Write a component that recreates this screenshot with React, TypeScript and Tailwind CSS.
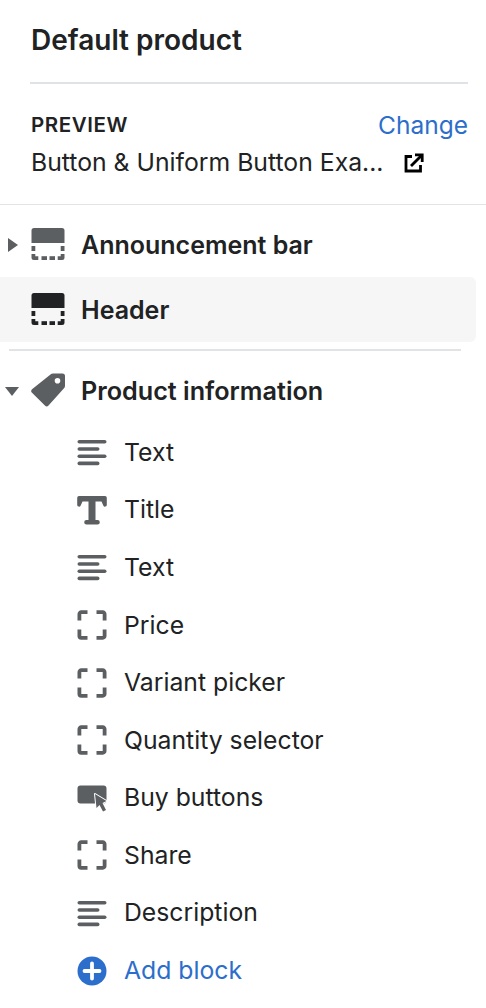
import React from 'react';

const ICON = '#5c5f62';

function LinesIcon() {
  return (
    <svg width="32" height="32" viewBox="0 0 32 32" fill={ICON}>
      <rect x="1.500" y="4" width="29" height="3.600" rx="1.800" />
      <rect x="1.500" y="11.200" width="22" height="3.600" rx="1.800" />
      <rect x="1.500" y="18.400" width="29" height="3.600" rx="1.800" />
      <rect x="1.500" y="25.600" width="22" height="3.600" rx="1.800" />
    </svg>
  );
}

function TitleIcon() {
  return (
    <svg width="32" height="32" viewBox="0 0 32 32" fill={ICON}>
      <path d="M3 2h26a1.800 1.800 0 0 1 1.800 1.800V11a1.800 1.800 0 0 1-3.500.4L25.500 7.500H19.500V26h2a2.300 2.300 0 0 1 0 4.600H10.500a2.300 2.300 0 0 1 0-4.600h2V7.500H6.500L4.700 11.400A1.800 1.800 0 0 1 1.200 11V3.800A1.800 1.800 0 0 1 3 2z" />
    </svg>
  );
}

function FrameIcon() {
  return (
    <svg width="32" height="32" viewBox="0 0 32 32" fill="none" stroke={ICON} strokeWidth="3.800">
      <path d="M3.400 11.500V5a1.800 1.800 0 0 1 1.800-1.800H11.500" />
      <path d="M20.500 3.200h6.300a1.800 1.800 0 0 1 1.800 1.800v6.500" />
      <path d="M3.400 20.500V27a1.800 1.800 0 0 0 1.800 1.800H11.500" />
      <path d="M20.500 28.800h6.300a1.800 1.800 0 0 0 1.800-1.800v-6.500" />
    </svg>
  );
}

function BuyIcon() {
  return (
    <svg width="32" height="32" viewBox="0 0 32 32" fill={ICON}>
      <rect x="1.500" y="3.500" width="29" height="18" rx="3" />
      <path
        d="M19 12l11.500 7-4 2 3.500 7-3 1.500-3.500-6.500-3 3z"
        stroke="#fff"
        strokeWidth="2"
        strokeLinejoin="round"
        paintOrder="stroke"
      />
    </svg>
  );
}

function SectionIcon({ color }: { color: string }) {
  return (
    <svg className="mb-[2px]" width="34" height="34" viewBox="0 0 34 34" fill={color}>
      <path d="M3 1h28a2.500 2.500 0 0 1 2.500 2.500V16H.5V3.500A2.500 2.500 0 0 1 3 1z" />
      <rect x="0.500" y="19" width="3.800" height="5" />
      <rect x="29.700" y="19" width="3.800" height="5" />
      <path d="M.5 27h3.800v2.200h3V33H3a2.500 2.500 0 0 1-2.500-2.500z" />
      <rect x="10.500" y="29.200" width="5.500" height="3.800" />
      <rect x="18.500" y="29.200" width="5.500" height="3.800" />
      <path d="M33.500 27h-3.800v2.200h-3V33H31a2.500 2.500 0 0 0 2.500-2.500z" />
    </svg>
  );
}

function TagIcon() {
  return (
    <svg className="mb-[2px]" width="34" height="34" viewBox="0 0 34 34" fill={ICON}>
      <path
        fillRule="evenodd"
        d="M22 .5h9.500A2.500 2.500 0 0 1 34 3v10a3 3 0 0 1-1 2.200L17.500 32.500a2.500 2.500 0 0 1-3.600 0L1 19.800a2.500 2.500 0 0 1 0-3.500L19.500 1.500A3.500 3.500 0 0 1 22 .5zM26.500 5a2.800 2.800 0 1 0 0 5.600 2.800 2.800 0 0 0 0-5.600z"
      />
    </svg>
  );
}

function PlusIcon() {
  return (
    <svg width="32" height="32" viewBox="0 0 32 32">
      <circle cx="16" cy="16" r="14.500" fill="#2c6ecb" />
      <path d="M16 8.500v15M8.500 16h15" stroke="#fff" strokeWidth="3.800" strokeLinecap="round" />
    </svg>
  );
}

function ExternalIcon() {
  return (
    <svg width="20" height="20" viewBox="0 0 20 20" fill="none" stroke="#000" strokeWidth="2.800">
      <path d="M8 3.500H2v14.500h14.500v-6" />
      <path d="M7 13L17 3" />
      <path d="M11 1.800h7.200V9" />
    </svg>
  );
}

const blocks: { label: string; icon: React.ReactNode }[] = [
  { label: 'Text', icon: <LinesIcon /> },
  { label: 'Title', icon: <TitleIcon /> },
  { label: 'Text', icon: <LinesIcon /> },
  { label: 'Price', icon: <FrameIcon /> },
  { label: 'Variant picker', icon: <FrameIcon /> },
  { label: 'Quantity selector', icon: <FrameIcon /> },
  { label: 'Buy buttons', icon: <BuyIcon /> },
  { label: 'Share', icon: <FrameIcon /> },
  { label: 'Description', icon: <LinesIcon /> },
];

export default function App() {
  return (
    <div className="w-[486px] h-[1008px] overflow-hidden bg-white text-[#202223] font-['Inter',sans-serif]">
      <div className="ml-[30px] mr-[18px] h-[84px] border-b-2 border-[#dfe3e8] pt-[22px]">
        <h1 className="pl-[1px] text-[28px] leading-[36px] font-semibold">Default product</h1>
      </div>

      <div className="h-[121px] border-b border-[#e1e3e5] px-[31px] pt-[25px]">
        <div className="flex items-center justify-between h-[33px] -mr-[13px]">
          <span className="text-[20.500px] font-semibold tracking-[0.6px]">PREVIEW</span>
          <span className="text-[24.500px] text-[#2c6ecb]">Change</span>
        </div>
        <div className="flex items-center h-[41px]">
          <span className="text-[24.750px] w-[373px]">Button &amp; Uniform Button Exa...</span>
          <ExternalIcon />
        </div>
      </div>

      <div className="flex items-center h-[79px] pl-[8px]">
        <span className="w-0 h-0 border-y-[7px] border-y-transparent border-l-[10px] border-l-[#5c5f62]" />
        <span className="ml-[13px] flex"><SectionIcon color="#5c5f62" /></span>
        <span className="ml-[16px] pt-[2px] text-[25px] font-semibold">Announcement bar</span>
      </div>

      <div className="flex items-center h-[65px] mr-[10px] bg-[#f6f6f7] rounded-r-md pl-[31px] -mt-[7px]">
        <SectionIcon color="#202223" />
        <span className="ml-[16px] pt-[2px] text-[25px] font-semibold">Header</span>
      </div>

      <div className="ml-[9px] mr-[25px] mt-[7px] border-b-2 border-[#e1e3e5]" />

      <div className="flex items-center h-[80px] pl-[5px]">
        <span className="w-0 h-0 border-x-[7.500px] border-x-transparent border-t-[9px] border-t-[#5c5f62]" />
        <span className="ml-[12px] flex"><TagIcon /></span>
        <span className="ml-[16px] pt-[2px] text-[25.200px] font-semibold">Product information</span>
      </div>

      <div className="-mt-[7.500px] pl-[76px]">
        {blocks.map((block, i) => (
          <div key={i} className="flex items-center h-[57.600px]">
            <span className="w-[48px] shrink-0">{block.icon}</span>
            <span className="text-[24.750px]">{block.label}</span>
          </div>
        ))}
        <div className="flex items-center h-[57.600px]">
          <span className="w-[48px] shrink-0"><PlusIcon /></span>
          <span className="text-[24.750px] text-[#2c6ecb]">Add block</span>
        </div>
      </div>
    </div>
  );
}
